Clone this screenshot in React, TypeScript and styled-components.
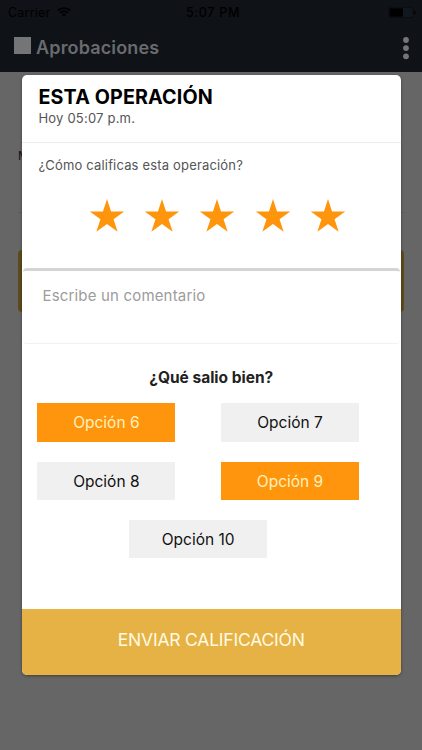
import React from "react";
import styled, { createGlobalStyle } from "styled-components";

const GlobalStyle = createGlobalStyle`
  * { box-sizing: border-box; }
  body { margin: 0; background: #666; font-family: Inter, "Liberation Sans", sans-serif; }
  button, textarea { font-family: inherit; border: 0; margin: 0; border-radius: 0; }
`;

const Screen = styled.div`
  position: relative;
  width: 422px;
  height: 750px;
  overflow: hidden;
  background: #666;
`;

const TopBar = styled.header`
  height: 72px;
  background: #0f1217;
`;

const StatusBar = styled.div`
  display: grid;
  grid-template-columns: 1fr auto 1fr;
  align-items: center;
  height: 24px;
  padding: 0 6px 0 8px;
  color: #000;
  font-size: 12.5px;
`;

const Carrier = styled.div`
  display: flex;
  align-items: center;
  gap: 7px;
  letter-spacing: 0.2px;
`;

const Clock = styled.div`
  padding-left: 2px;
  font-weight: 500;
  letter-spacing: 0.7px;
`;

const BatterySlot = styled.div`
  display: flex;
  justify-content: flex-end;
`;

const NavBar = styled.div`
  display: flex;
  align-items: center;
  height: 48px;
  padding: 0 12px 0 14px;
`;

const NavIcon = styled.div`
  width: 17px;
  height: 17px;
  margin: -5px 5px 0 0;
  background: #747577;
`;

const NavTitle = styled.h1`
  flex: 1;
  margin: -1px 0 0;
  color: #696b6e;
  font-size: 18px;
  font-weight: 600;
  line-height: 22px;
  letter-spacing: 0.15px;
`;

const Backdrop = styled.main`
  padding: 75px 18px 0;
`;

const BackdropLabel = styled.div`
  height: 66px;
  border-bottom: 1px solid #5c5c5c;
  color: #111;
  font-size: 12px;
  line-height: 18px;
`;

const BackdropButton = styled.div`
  height: 62px;
  margin-top: 37px;
  border-radius: 4px;
  background: #5f4a1c;
`;

const Dialog = styled.section`
  position: absolute;
  left: 22px;
  top: 75px;
  display: flex;
  flex-direction: column;
  width: 378.5px;
  height: 599.6px;
  overflow: hidden;
  border-radius: 5px;
  background: #fff;
  box-shadow: 0 1px 3px rgba(0, 0, 0, 0.4);
`;

const DialogHeader = styled.header`
  height: 68px;
  padding: 10px 16.5px 0;
  border-bottom: 1px solid #ececec;
`;

const DialogTitle = styled.h2`
  margin: 0;
  color: #000;
  font-size: 19.7px;
  font-weight: 700;
  line-height: 24px;
  letter-spacing: 0.13px;
`;

const DialogTime = styled.div`
  color: #555;
  font-size: 13px;
  line-height: 18px;
  letter-spacing: 0.2px;
`;

const Rating = styled.div`
  height: 125px;
  padding: 13px 16.5px 0;
`;

const RatingQuestion = styled.div`
  color: #555;
  font-size: 13px;
  line-height: 18px;
  letter-spacing: 0.17px;
`;

const Stars = styled.div`
  display: flex;
  gap: 19.2px;
  margin: 25.3px 0 0 50.5px;
`;

const Comment = styled.textarea`
  display: block;
  flex: none;
  width: 376.5px;
  height: 76px;
  margin-left: 1px;
  padding: 15px 19.5px 0;
  border-top: 3px solid #d4d4d4;
  border-bottom: 1px solid #f1f1f1;
  border-radius: 4px;
  outline: 0;
  resize: none;
  background: #fff;
  font-size: 15px;
  line-height: 20px;
  letter-spacing: 0.17px;
  &::placeholder { color: #9c9c9c; opacity: 1; }
`;

const Feedback = styled.div`
  flex: 1;
  padding-top: 24.4px;
`;

const FeedbackTitle = styled.h3`
  margin: 0;
  color: #222;
  font-size: 15.5px;
  font-weight: 700;
  line-height: 20px;
  text-align: center;
`;

const Options = styled.div`
  display: flex;
  flex-wrap: wrap;
  justify-content: center;
  gap: 20.1px 45.5px;
  width: 322px;
  margin: 15px 0 0 15.2px;
`;

const Option = styled.button<{ $selected?: boolean }>`
  width: 138.2px;
  height: 38.2px;
  padding: 1.8px 0 0;
  background: ${(p) => (p.$selected ? "#ff950c" : "#f0f0f0")};
  color: ${(p) => (p.$selected ? "#fff1bd" : "#111")};
  font-size: 15.5px;
  line-height: 20px;
`;

const Submit = styled.button`
  flex: none;
  height: 65.7px;
  padding: 0 0 4px;
  background: #e6b246;
  color: #fffbe2;
  font-size: 17.5px;
  line-height: 22px;
  letter-spacing: -0.2px;
`;

const starPoints = Array.from({ length: 10 }, (_, i) => {
  const r = i % 2 ? 6.9 : 18.1;
  const a = (i * Math.PI) / 5;
  return `${(18 + r * Math.sin(a)).toFixed(2)},${(18.2 - r * Math.cos(a)).toFixed(2)}`;
}).join(" ");

const options = [
  { label: "Opción 6", selected: true },
  { label: "Opción 7" },
  { label: "Opción 8" },
  { label: "Opción 9", selected: true },
  { label: "Opción 10" },
];

const WifiIcon = () => (
  <svg width="14" height="10" viewBox="0 0 14 10">
    <g fill="none" stroke="#000" strokeWidth="1.7">
      <path d="M.8 3.7a8.8 8.8 0 0 1 12.4 0" />
      <path d="M3.1 6a5.5 5.5 0 0 1 7.8 0" />
    </g>
    <path d="M4.8 7.5a3.1 3.1 0 0 1 4.4 0L7 9.8z" />
  </svg>
);

const BatteryIcon = () => (
  <svg width="28" height="11" viewBox="0 0 28 11">
    <rect x=".5" y=".5" width="24.5" height="10" rx="2" fill="#10171e" stroke="#0a0d11" />
    <path d="M1.5 1.3h13.5v8.4H1.5z" />
    <path d="M26 3.5q3 2 0 4z" />
  </svg>
);

const MenuIcon = () => (
  <svg width="8" height="24" viewBox="0 0 8 24" fill="#747577">
    <circle cx="4" cy="4" r="2.9" />
    <circle cx="4" cy="12.1" r="2.9" />
    <circle cx="4" cy="20.3" r="2.9" />
  </svg>
);

export default function App() {
  return (
    <Screen>
      <GlobalStyle />
      <TopBar>
        <StatusBar>
          <Carrier>Carrier <WifiIcon /></Carrier>
          <Clock>5:07 PM</Clock>
          <BatterySlot><BatteryIcon /></BatterySlot>
        </StatusBar>
        <NavBar>
          <NavIcon />
          <NavTitle>Aprobaciones</NavTitle>
          <MenuIcon />
        </NavBar>
      </TopBar>
      <Backdrop>
        <BackdropLabel>M</BackdropLabel>
        <BackdropButton />
      </Backdrop>
      <Dialog>
        <DialogHeader>
          <DialogTitle>ESTA OPERACIÓN</DialogTitle>
          <DialogTime>Hoy 05:07 p.m.</DialogTime>
        </DialogHeader>
        <Rating>
          <RatingQuestion>¿Cómo calificas esta operación?</RatingQuestion>
          <Stars>
            {[1, 2, 3, 4, 5].map((n) => (
              <svg key={n} width="36" height="36" viewBox="0 0 36 36">
                <polygon points={starPoints} fill="#ff950c" />
              </svg>
            ))}
          </Stars>
        </Rating>
        <Comment placeholder="Escribe un comentario" />
        <Feedback>
          <FeedbackTitle>¿Qué salio bien?</FeedbackTitle>
          <Options>
            {options.map((o) => (
              <Option key={o.label} $selected={o.selected}>{o.label}</Option>
            ))}
          </Options>
        </Feedback>
        <Submit>ENVIAR CALIFICACIÓN</Submit>
      </Dialog>
    </Screen>
  );
}
